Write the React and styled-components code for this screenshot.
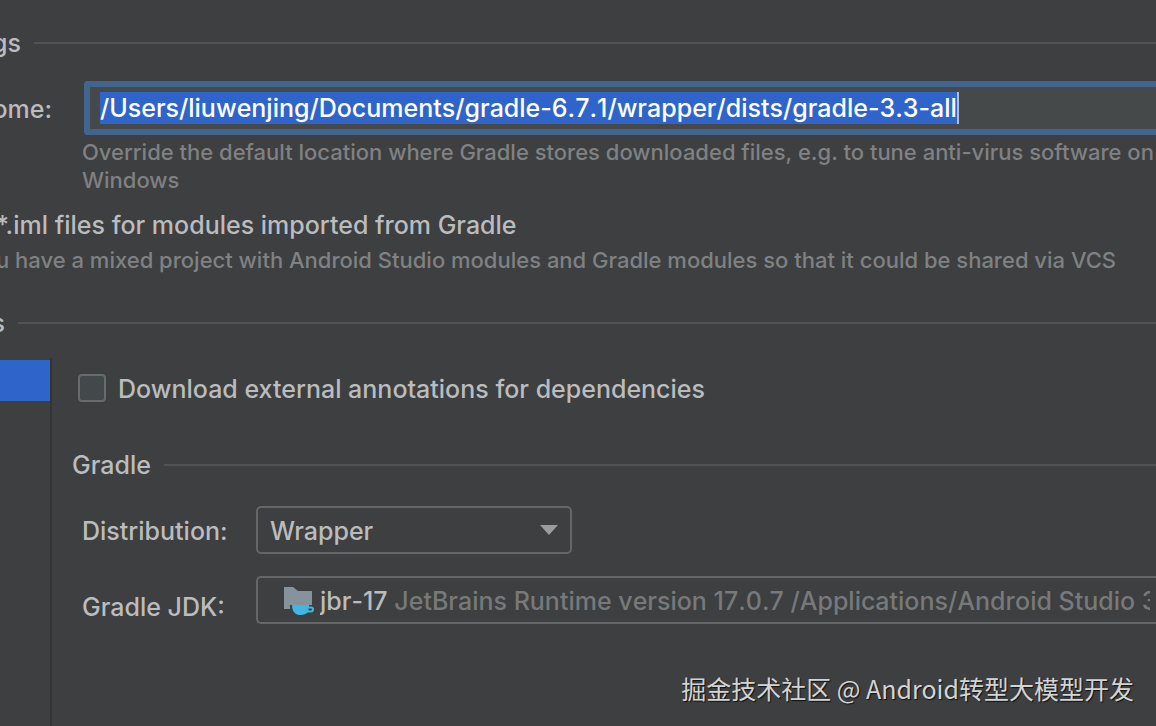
import React, { useEffect, useRef } from 'react'
import styled, { createGlobalStyle } from 'styled-components'

const App = () => {
    const homeRef = useRef(null)

    useEffect(() => {
        homeRef.current.focus()
        homeRef.current.select()
    }, [])

    return (
        <>
            <GlobalStyle />
            <Page>
                <SectionTitle $width="21px">
                    <h2>gs</h2>
                    <Rule />
                </SectionTitle>

                <HomeRow>
                    <HomeLabel htmlFor="home">ome:</HomeLabel>
                    <HomeField>
                        <HomeInput
                            id="home"
                            ref={homeRef}
                            spellCheck={false}
                            defaultValue="/Users/liuwenjing/Documents/gradle-6.7.1/wrapper/dists/gradle-3.3-all"
                        />
                        <Caret />
                    </HomeField>
                </HomeRow>
                <HomeHint>
                    Override the default location where Gradle stores downloaded files, e.g. to tune anti-virus software on
                    <br />
                    Windows
                </HomeHint>

                <ImlText>*.iml files for modules imported from Gradle</ImlText>
                <ImlHint>u have a mixed project with Android Studio modules and Gradle modules so that it could be shared via VCS</ImlHint>

                <SectionTitle $width="5px">
                    <h2>s</h2>
                    <Rule />
                </SectionTitle>

                <Projects>
                    <ProjectList>
                        <SelectedProject />
                    </ProjectList>
                    <Settings>
                        <CheckLabel>
                            <Checkbox type="checkbox" />
                            <span>Download external annotations for dependencies</span>
                        </CheckLabel>

                        <SectionTitle>
                            <h2>Gradle</h2>
                            <Rule />
                        </SectionTitle>

                        <Form>
                            <DistributionLabel htmlFor="distribution">Distribution:</DistributionLabel>
                            <SelectBox>
                                <Select id="distribution" defaultValue="Wrapper">
                                    <option>Wrapper</option>
                                </Select>
                                <Arrow viewBox="0 0 18 10">
                                    <path d="M0 0h18L9 10z" fill="#9a9da0" />
                                </Arrow>
                            </SelectBox>

                            <JdkLabel htmlFor="jdk">Gradle JDK:</JdkLabel>
                            <JdkButton id="jdk" type="button">
                                <JdkIcon />
                                <JdkText>
                                    jbr-17 <Muted>JetBrains Runtime version 17.0.7 /Applications/Android Studio 3</Muted>
                                </JdkText>
                            </JdkButton>
                        </Form>
                    </Settings>
                </Projects>

                <Watermark>掘金技术社区 @ Android转型大模型开发</Watermark>
            </Page>
        </>
    )
}

const JdkIcon = () => (
    <Folder viewBox="0 0 30 28">
        <path d="M0 0h9l5 4h14v14H6v4H0z" fill="#87939a" />
        <path
            d="M8 18h17v1.500h2a3 3 0 0 1 0 6h-3.500C22 27 20 28 17 28h-2C11 27.500 8 24 8 18zM24.500 21.500v2H27a1 1 0 0 0 0-2z"
            fill="#40b6e0"
            fillRule="evenodd"
        />
    </Folder>
)

const GlobalStyle = createGlobalStyle`
    * {
        box-sizing: border-box;
    }

    body {
        margin: 0;
        background: #3d3f41;
        color: #bbbcbd;
        font-family: Inter, "Liberation Sans", sans-serif;
        font-size: 25px;
        font-weight: 500;
        line-height: 32px;
    }

    input, select, button {
        margin: 0;
        font: inherit;
        color: inherit;
    }
`

const Page = styled.main`
    position: relative;
    display: flex;
    flex-direction: column;
    min-height: 100vh;
    padding-top: 27px;
    overflow: hidden;
    white-space: nowrap;
`

const SectionTitle = styled.div`
    display: flex;
    align-items: center;
    gap: 13px;

    h2 {
        display: flex;
        justify-content: flex-end;
        width: ${({ $width }) => $width || 'auto'};
        margin: 0;
        font-size: inherit;
        font-weight: inherit;
    }
`

const Rule = styled.div`
    flex: 1;
    height: 2px;
    background: #505254;
`

const HomeRow = styled.div`
    display: flex;
    align-items: center;
    margin-top: 22px;
`

const HomeLabel = styled.label`
    display: flex;
    justify-content: flex-end;
    width: 52px;
    margin-right: 32px;
    padding-top: 2px;
`

const HomeField = styled.div`
    display: flex;
    flex: 1;
    align-items: center;
    height: 54px;
    padding-left: 10px;
    border: 6px solid #41658c;
    border-right: 0;
    border-radius: 4px 0 0 4px;
    background: #45494a;
`

const HomeInput = styled.input`
    field-sizing: content;
    height: 32px;
    padding: 0;
    border: 0;
    outline: 0;
    background: none;
    color: #fff;
    font-kerning: none;
    line-height: 32px;

    &::selection {
        background: #2f65ca;
        color: #fff;
    }
`

const Caret = styled.span`
    width: 2px;
    height: 32px;
    background: #b4bed4;
`

const Hint = styled.p`
    margin: 0;
    color: #808182;
    font-size: 22px;
    font-weight: 450;
    line-height: 28px;
`

const HomeHint = styled(Hint)`
    margin: 3px 0 0 82px;
`

const ImlText = styled.div`
    margin: 15px 0 0 -4px;
`

const ImlHint = styled(Hint)`
    margin: 5px 0 33px -4px;
`

const Projects = styled.div`
    display: flex;
    flex: 1;
    margin-top: 19px;
`

const ProjectList = styled.aside`
    width: 52px;
    padding-top: 2px;
    border-right: 2px solid #323436;
`

const SelectedProject = styled.div`
    height: 41px;
    background: #2f65ca;
`

const Settings = styled.section`
    flex: 1;
    min-width: 0;
    padding: 13px 0 100px 20px;
`

const CheckLabel = styled.label`
    display: flex;
    align-items: center;
    gap: 12px;
    margin: 0 0 44px 6px;

    span {
        padding-top: 2px;
    }
`

const Checkbox = styled.input`
    appearance: none;
    width: 28px;
    height: 28px;
    border: 2px solid #686b6c;
    border-radius: 4px;
    background: #43494a;
`

const Form = styled.div`
    display: grid;
    grid-template-columns: 148px 1fr;
    gap: 22px 26px;
    align-items: center;
    margin: 25px 0 0 10px;
`

const DistributionLabel = styled.label`
    padding-top: 2px;
`

const SelectBox = styled.div`
    display: flex;
    align-items: center;
    width: 316px;
`

const Select = styled.select`
    appearance: none;
    width: 100%;
    height: 48px;
    padding: 2px 12px 0;
    border: 2px solid #646667;
    border-radius: 5px;
    background: none;
`

const Arrow = styled.svg`
    flex: none;
    width: 18px;
    height: 10px;
    margin-left: -32px;
    pointer-events: none;
`

const JdkLabel = styled.label`
    padding-top: 14px;
`

const JdkButton = styled.button`
    display: flex;
    align-items: center;
    gap: 6px;
    min-width: 0;
    height: 48px;
    padding: 2px 6px 0 26px;
    border: 2px solid #646667;
    border-right: 0;
    border-radius: 5px 0 0 5px;
    background: none;
    font-kerning: none;
    text-align: left;
`

const Folder = styled.svg`
    flex: none;
    width: 30px;
    height: 28px;
`

const JdkText = styled.span`
    flex: 1;
    overflow: hidden;
`

const Muted = styled.span`
    color: #77797a;
    font-weight: 450;
`

const Watermark = styled.div`
    position: absolute;
    right: 22px;
    bottom: 22px;
    color: #d4d4d4;
    font-family: "Noto Sans CJK SC", sans-serif;
    font-weight: 400;
    text-shadow: 1px 1px 1px #111;
`

export default App
